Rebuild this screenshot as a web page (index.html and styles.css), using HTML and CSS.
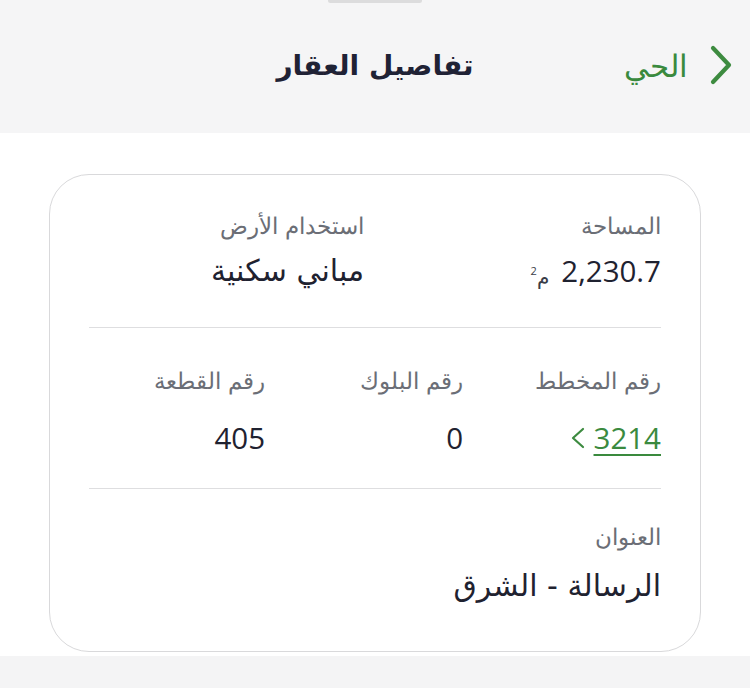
FILE: index.html
```html
<!DOCTYPE html>
<html lang="ar" dir="rtl">
<head>
<meta charset="utf-8">
<title>تفاصيل العقار</title>
<link rel="stylesheet" href="styles.css">
</head>
<body>
<div class="page">
  <header class="topbar">
    <span class="handle"></span>
    <a class="back" href="#">
      <svg class="chev" width="22" height="40" viewBox="0 0 22 40"><path d="M3 3 L19 20 L3 37" fill="none" stroke="#3d8b40" stroke-width="4.2" stroke-linecap="round" stroke-linejoin="round"/></svg>
      <span>الحي</span>
    </a>
    <h1 class="title">تفاصيل العقار</h1>
    <span class="spacer"></span>
  </header>

  <main class="content">
    <section class="card">
      <div class="row row-two s1">
        <div class="field">
          <div class="label">المساحة</div>
          <div class="value"><span class="num">2,230.7</span><span class="unit">م<sup>2</sup></span></div>
        </div>
        <div class="field">
          <div class="label">استخدام الأرض</div>
          <div class="value"><span class="ar">مباني سكنية</span></div>
        </div>
      </div>
      <div class="row row-three s2">
        <div class="field">
          <div class="label">رقم المخطط</div>
          <div class="value"><a class="link num" href="#">3214</a><svg class="lchev" width="16" height="24" viewBox="0 0 16 24"><path d="M13 3 L3 12 L13 21" fill="none" stroke="#3d8b40" stroke-width="2.2" stroke-linecap="round" stroke-linejoin="round"/></svg></div>
        </div>
        <div class="field">
          <div class="label">رقم البلوك</div>
          <div class="value"><span class="num">0</span></div>
        </div>
        <div class="field">
          <div class="label">رقم القطعة</div>
          <div class="value"><span class="num">405</span></div>
        </div>
      </div>
      <div class="row s3">
        <div class="field">
          <div class="label">العنوان</div>
          <div class="value"><span class="ar">الرسالة - الشرق</span></div>
        </div>
      </div>
    </section>
  </main>
  <div class="footer-fill"></div>
</div>
</body>
</html>
```

FILE: styles.css
```css
* { box-sizing: border-box; }
html, body { margin: 0; padding: 0; }
body {
  width: 750px;
  height: 688px;
  overflow: hidden;
  background: #f4f4f5;
  font-family: "Open Sans", "DejaVu Sans", sans-serif;
  color: #1f2230;
}
.page { display: flex; flex-direction: column; height: 688px; }

.topbar {
  position: relative;
  height: 133px;
  flex: none;
  background: #f5f5f6;
  display: grid;
  grid-template-columns: 1fr auto 1fr;
  align-items: center;
  padding: 0 18px;
}
.handle {
  position: absolute;
  top: -2px;
  left: 328px;
  width: 94px;
  height: 5px;
  border-radius: 3px;
  background: #dcdcdd;
}
.back {
  display: flex;
  align-items: center;
  gap: 22px;
  text-decoration: none;
  color: #3a8a3e;
  font-family: "DejaVu Sans", sans-serif;
  font-size: 31px;
  font-weight: 300;
  justify-self: start;
  margin-top: -4px;
}
.back span { line-height: 40px; margin-top: 2px; }
.chev { display: block; }
.title {
  margin: 0;
  font-family: "DejaVu Sans", sans-serif;
  font-size: 28px;
  font-weight: 700;
  color: #1f2235;
  line-height: 40px;
  margin-top: -2px;
}

.content {
  background: #ffffff;
  padding: 41px 49px 4px;
  flex: none;
}
.card {
  border: 1.5px solid #d9d9db;
  border-radius: 40px;
  padding: 0 39px;
  height: 478px;
  background: #fff;
}
.row { display: grid; }
.row-two { grid-template-columns: 297px 297px; }
.row-three { grid-template-columns: 198px 198px 198px; }
.s1 { padding: 36px 0 36px; border-bottom: 1.5px solid #dedee0; }
.s2 { padding: 38px 0 30px; border-bottom: 1.5px solid #dedee0; }
.s3 { padding: 33px 0 0; }

.label {
  font-family: "DejaVu Sans", sans-serif;
  font-size: 22.5px;
  height: 30px;
  line-height: 30px;
  color: #6b6e76;
  font-weight: 300;
  white-space: nowrap;
}
.value {
  height: 40px;
  line-height: 40px;
  color: #1f2230;
  display: flex;
  align-items: center;
  white-space: nowrap;
}
.s1 .value { margin-top: 10px; }
.s2 .value { margin-top: 22px; }
.s3 .value { margin-top: 14px; }
.ar {
  font-family: "DejaVu Sans", sans-serif;
  font-size: 30px;
}
.num {
  font-family: "Open Sans", sans-serif;
  font-size: 29.5px;
  unicode-bidi: isolate;
  direction: ltr;
}
.unit {
  font-family: "DejaVu Sans", sans-serif;
  font-size: 20px;
  color: #3a3d48;
  margin-right: 12px;
  margin-top: 6px;
}
.unit sup { font-size: 11px; font-family: "Open Sans", sans-serif; vertical-align: 9px; }
.link {
  color: #3a8a3e;
  text-decoration: underline;
  text-decoration-thickness: 1.5px;
  text-underline-offset: 5px;
}
.lchev { margin-right: 8px; display: block; }
.footer-fill { flex: 1; background: #f4f4f5; }
```
